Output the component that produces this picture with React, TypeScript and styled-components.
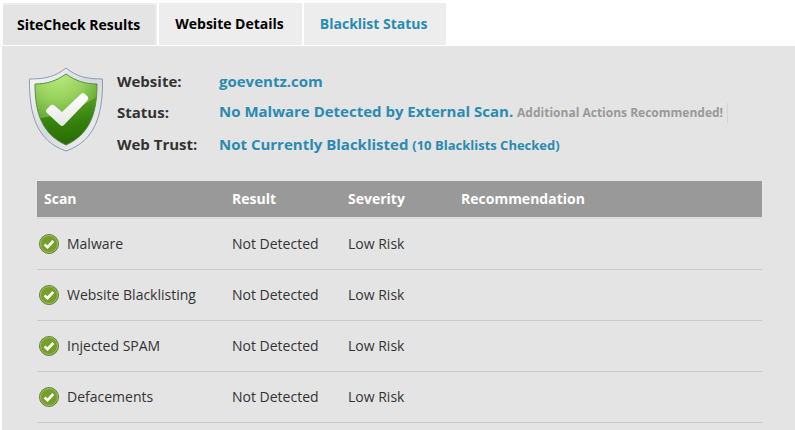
import React from "react";
import styled, { createGlobalStyle } from "styled-components";

const GlobalStyle = createGlobalStyle`
  * { box-sizing: border-box; }
  body {
    margin: 0;
    background: #fff;
    color: #333;
    font-family: "Open Sans", "Noto Sans", sans-serif;
    font-size: 14px;
    line-height: 20px;
  }
`;

const Page = styled.main`
  display: flex;
  flex-direction: column;
  min-height: 100vh;
  padding: 3px 0 0 2px;
`;

const Tabs = styled.nav`
  display: flex;
  gap: 2px;
  padding-left: 1px;
  margin-bottom: 1px;
`;

const Tab = styled.button<{ $active?: boolean; $link?: boolean }>`
  height: 42px;
  padding: ${(p) => (p.$active ? "2px 17px 0 14px" : "0 18px 0 16px")};
  border: 0;
  background: ${(p) => (p.$active ? "#e4e4e4" : "#ededed")};
  box-shadow: ${(p) => (p.$active ? "inset -2px 2px 0 #ededed" : "none")};
  color: ${(p) => (p.$link ? "#2a8bb0" : "#000")};
  font: 700 14px/20px "Open Sans", "Noto Sans", sans-serif;
  white-space: nowrap;
  cursor: pointer;
`;

const Panel = styled.section`
  flex: 1;
  padding: 20px 33px 7px 35px;
  background: #e4e4e4;
`;

const Summary = styled.div`
  display: flex;
  align-items: flex-start;
  gap: 14px;
  margin: 0 0 21px -9px;
`;

const Shield = styled.svg`
  flex: none;
  width: 75px;
  height: 86px;
`;

const Facts = styled.dl`
  display: grid;
  grid-template-columns: 102px auto;
  grid-template-rows: 30px 32px 32px;
  align-items: center;
  margin: 0;
  font-size: 15px;
  font-weight: 700;
  white-space: nowrap;
`;

const Term = styled.dt``;

const Value = styled.dd`
  margin: 0;
  color: #2a8bb0;
`;

const SiteLink = styled.a`
  color: inherit;
  text-decoration: none;
`;

const Note = styled.small<{ $muted?: boolean }>`
  display: inline-block;
  padding-right: 4px;
  border-right: ${(p) => (p.$muted ? "1px solid #ced8dc" : "0")};
  color: ${(p) => (p.$muted ? "#999" : "inherit")};
  font-size: ${(p) => (p.$muted ? "12px" : "13px")};
`;

const ScanTable = styled.table`
  width: 100%;
  table-layout: fixed;
  border-collapse: separate;
  border-spacing: 0;
`;

const HeadCell = styled.th<{ $width?: number }>`
  width: ${(p) => (p.$width ? `${p.$width}px` : "auto")};
  height: 38px;
  padding: 0 7px;
  border-bottom: 2px solid #dcdcdc;
  background: #999;
  background-clip: padding-box;
  color: #fff;
  font-weight: 700;
  text-align: left;
`;

const Cell = styled.td`
  height: 51px;
  padding: 0 7px;
  border-bottom: 1px solid #cacaca;
`;

const ScanName = styled.div`
  display: flex;
  align-items: center;
  gap: 7px;
  margin-left: -6px;
`;

const Tick = styled.svg`
  flex: none;
  width: 22px;
  height: 22px;
`;

const scans = ["Malware", "Website Blacklisting", "Injected SPAM", "Defacements"];

const ShieldIcon = () => (
  <Shield viewBox="0 0 75 86" role="img" aria-label="Protected">
    <defs>
      <linearGradient id="rim" x1="0" y1="0" x2="1" y2="1">
        <stop offset="0" stopColor="#f8fafc" />
        <stop offset="0.5" stopColor="#d5d9df" />
        <stop offset="1" stopColor="#f3f5f7" />
      </linearGradient>
      <radialGradient id="glow" cx="0.4" cy="0" r="1">
        <stop offset="0" stopColor="#c4f385" />
        <stop offset="0.4" stopColor="#96d05c" />
        <stop offset="0.75" stopColor="#4e9a20" />
        <stop offset="1" stopColor="#2b7104" />
      </radialGradient>
      <linearGradient id="shade" x1="0" y1="0" x2="0" y2="1">
        <stop offset="0" stopColor="#4d9d22" />
        <stop offset="0.5" stopColor="#2d7804" />
        <stop offset="1" stopColor="#236000" />
      </linearGradient>
      <linearGradient id="check" x1="0" y1="0" x2="0" y2="1">
        <stop offset="0" stopColor="#fff" />
        <stop offset="1" stopColor="#e6e8e6" />
      </linearGradient>
      <clipPath id="face">
        <path d="M38 8C48 15 57 18 69 18C69 47 62 68 38 79C14 68 7 47 7 18C19 18 28 15 38 8Z" />
      </clipPath>
    </defs>
    <path
      d="M38 2C48 10 57 13 74.5 13C75 49 67 75 38 85C9 75 1 49 1.5 13C19 13 28 10 38 2Z"
      fill="url(#rim)"
      stroke="#8c9baa"
      strokeWidth="1"
    />
    <g clipPath="url(#face)">
      <path d="M0 0H75V86H0Z" fill="url(#glow)" />
      <path d="M0 54C28 51 52 43 75 27V86H0Z" fill="url(#shade)" opacity="0.8" />
    </g>
    <path
      d="M38 8C48 15 57 18 69 18C69 47 62 68 38 79C14 68 7 47 7 18C19 18 28 15 38 8Z"
      fill="none"
      stroke="#5c8e42"
      strokeWidth="1"
    />
    <path
      d="M19 43L23 39Q25 38 27 40L34 46L53 28Q55 26 57 28L60 31Q61 33 59 35L36 59Q34 61 32 59L19 47Q17 45 19 43Z"
      fill="url(#check)"
    />
  </Shield>
);

const TickIcon = () => (
  <Tick viewBox="0 0 22 22" aria-hidden="true">
    <circle cx="11" cy="11" r="9.5" fill="#759f27" stroke="#64803f" strokeWidth="1" />
    <circle cx="11" cy="11" r="8.5" fill="none" stroke="#9dbd68" strokeWidth="1" />
    <path d="M6.5 11.5L9.5 14.2L15.3 8" fill="none" stroke="#fff" strokeWidth="2.7" />
  </Tick>
);

export default function App() {
  return (
    <>
      <GlobalStyle />
      <Page>
        <Tabs aria-label="Report sections">
          <Tab $active>SiteCheck Results</Tab>
          <Tab>Website Details</Tab>
          <Tab $link>Blacklist Status</Tab>
        </Tabs>
        <Panel>
          <Summary>
            <ShieldIcon />
            <Facts>
              <Term>Website:</Term>
              <Value><SiteLink href="#site">goeventz.com</SiteLink></Value>
              <Term>Status:</Term>
              <Value>
                No Malware Detected by External Scan.{" "}
                <Note $muted>Additional Actions Recommended!</Note>
              </Value>
              <Term>Web Trust:</Term>
              <Value>
                Not Currently Blacklisted <Note>(10 Blacklists Checked)</Note>
              </Value>
            </Facts>
          </Summary>
          <ScanTable>
            <thead>
              <tr>
                <HeadCell $width={188}>Scan</HeadCell>
                <HeadCell $width={116}>Result</HeadCell>
                <HeadCell $width={113}>Severity</HeadCell>
                <HeadCell>Recommendation</HeadCell>
              </tr>
            </thead>
            <tbody>
              {scans.map((name) => (
                <tr key={name}>
                  <Cell><ScanName><TickIcon />{name}</ScanName></Cell>
                  <Cell>Not Detected</Cell>
                  <Cell>Low Risk</Cell>
                  <Cell />
                </tr>
              ))}
            </tbody>
          </ScanTable>
        </Panel>
      </Page>
    </>
  );
}
